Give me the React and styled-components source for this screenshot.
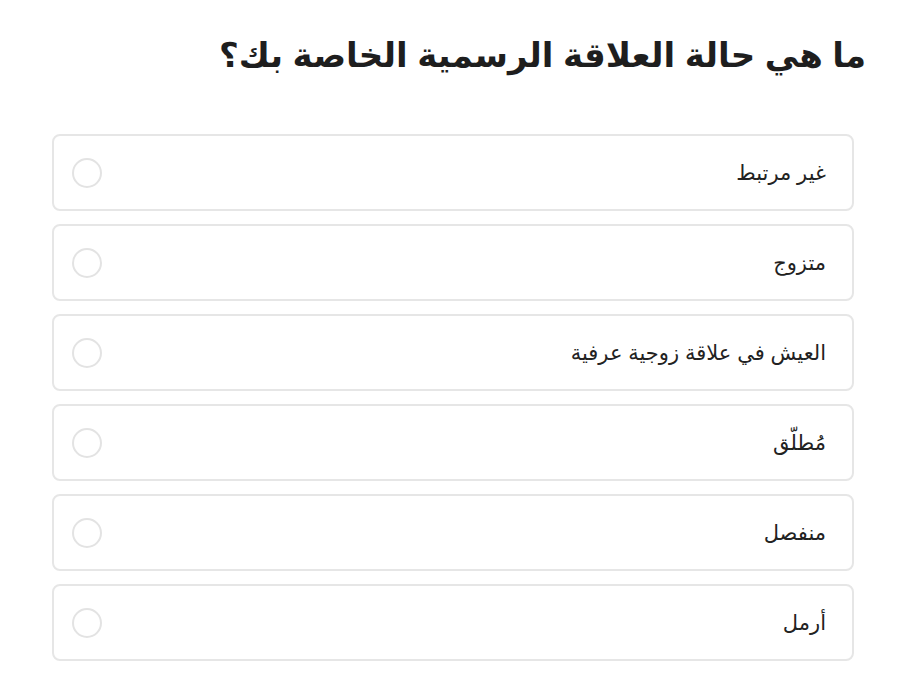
import React from "react";
import styled, { createGlobalStyle } from "styled-components";

const Global = createGlobalStyle`
  html, body { margin: 0; padding: 0; background: #ffffff; }
  body { font-family: "Liberation Sans", "DejaVu Sans", sans-serif; color: #222; }
`;

const Page = styled.div`
  direction: rtl;
  width: 900px;
  height: 688px;
  box-sizing: border-box;
  padding: 28px 34px 0 46px;
  display: flex;
  flex-direction: column;
`;

const Title = styled.h1`
  margin: 0 0 52px 0;
  font-size: 34px;
  font-weight: bold;
  line-height: 54px;
  color: #1e1e1e;
  text-align: right;
`;

const List = styled.div`
  display: flex;
  flex-direction: column;
  gap: 13px;
  padding-left: 6px;
  padding-right: 12px;
`;

const Option = styled.label`
  display: flex;
  align-items: center;
  justify-content: space-between;
  height: 77px;
  box-sizing: border-box;
  border: 2px solid #e6e6e6;
  border-radius: 8px;
  padding: 0 26px 0 18px;
  cursor: pointer;
  background: #fff;
`;

const Label = styled.span`
  font-size: 21px;
  color: #222;
`;

const Radio = styled.span`
  width: 30px;
  height: 30px;
  border-radius: 50%;
  border: 2px solid #e3e3e3;
  box-sizing: border-box;
  flex: none;
`;

const options = [
  "غير مرتبط",
  "متزوج",
  "العيش في علاقة زوجية عرفية",
  "مُطلّق",
  "منفصل",
  "أرمل",
];

export default function App() {
  return (
    <>
      <Global />
      <Page>
        <Title>ما هي حالة العلاقة الرسمية الخاصة بك؟</Title>
        <List>
          {options.map((o) => (
            <Option key={o}>
              <Label>{o}</Label>
              <Radio />
            </Option>
          ))}
        </List>
      </Page>
    </>
  );
}
